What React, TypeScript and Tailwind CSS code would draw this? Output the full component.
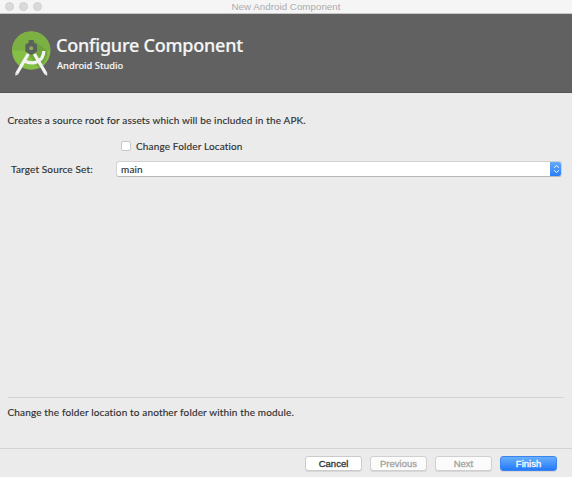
import React from "react";

function Logo() {
  return (
    <svg width="40" height="46" viewBox="0 0 40 46" className="block shrink-0">
      <circle cx="20.2" cy="19.6" r="19.2" fill="#85bf45" />
      <path d="M1 19.6a19.2 19.2 0 0 1 38.4 0Z" fill="#7cb043" />
      <path d="M23 9.5L36.5 20A19.2 19.2 0 0 1 28 36.4L18 25Z" fill="#5f9339" opacity=".5" />
      <path d="M17.2 23L5.8 42.5M23.4 23L34.8 42.5" stroke="#f3f3f3" strokeWidth="3.3" fill="none" />
      <path d="M4.4 41.7l2.8 1.6-2.8 1.5ZM36.2 41.7l-2.8 1.6 2.8 1.5Z" fill="#f3f3f3" />
      <path d="M13 29.8C22 34.3 32.4 31 32.8 20" stroke="#f3f3f3" strokeWidth="3.2" fill="none" />
      <path d="M17.7 9h5v2.7l3.3 1.9v7l-5.8 3.4-5.8-3.4v-7l3.3-1.9Z" fill="#5b605c" />
      <circle cx="20.2" cy="17.3" r="2" fill="#86ae5a" />
    </svg>
  );
}

function DialogButton({ label, tone }: { label: string; tone: "normal" | "disabled" | "primary" }) {
  const styles = {
    normal: "border-[#cbcbcb] bg-white text-[#303030]",
    disabled: "border-[#d0d0d0] bg-[#fbfbfb] text-[#a2a2a2]",
    primary: "border-[#3b85f2] bg-gradient-to-b from-[#68aefb] to-[#2379fb] text-white",
  };
  return (
    <button
      className={`flex h-[15px] w-[57px] items-center justify-center rounded-[3px] border font-['Liberation_Sans',sans-serif] text-[9.5px] leading-none shadow-[0_1px_0_#d7d7d7] [-webkit-text-stroke:0.3px_currentColor] ${styles[tone]}`}
    >
      {label}
    </button>
  );
}

export default function App() {
  return (
    <div className="flex h-[477px] w-[572px] flex-col overflow-hidden bg-[#ebebeb] font-['Lato',sans-serif] text-[10px] text-[#303030]">
      <div className="grid h-[14px] shrink-0 grid-cols-[1fr_auto_1fr] items-center border-b border-[#c9c9c9] bg-[#f5f5f5]">
        <div className="flex gap-[5px] pb-[1px] pl-[5px]">
          <span className="size-[9px] rounded-full border border-[#d0d0d0] bg-[#dadada]" />
          <span className="size-[9px] rounded-full border border-[#d0d0d0] bg-[#dadada]" />
          <span className="size-[9px] rounded-full border border-[#d0d0d0] bg-[#dadada]" />
        </div>
        <span className="font-['Liberation_Sans',sans-serif] text-[9.8px] leading-[13px] text-[#acacac]">New Android Component</span>
      </div>
      <header className="flex h-[79px] shrink-0 gap-[5px] border-b border-[#555] bg-[#616161] pt-[17px] pl-[11px] font-['Noto_Sans',sans-serif] text-[#f5f5f5]">
        <Logo />
        <div>
          <h1 className="mt-[2px] text-[18px] leading-6 font-medium tracking-[-0.22px] whitespace-nowrap [-webkit-text-stroke:0.2px_currentColor]">Configure Component</h1>
          <p className="mt-[3px] pl-px text-[9.3px] leading-3 font-medium [-webkit-text-stroke:0.15px_currentColor]">Android Studio</p>
        </div>
      </header>
      <main className="flex min-h-0 flex-1 flex-col pt-[20px] leading-[14px] tracking-[0.15px] [-webkit-text-stroke:0.15px_currentColor]">
        <p className="pl-[7.5px]">Creates a source root for assets which will be included in the APK.</p>
        <label className="mt-[12px] flex items-center gap-[5px] pl-[121px]">
          <span className="size-[10px] rounded-[2px] border border-[#c8c8c8] bg-white" />
          Change Folder Location
        </label>
        <div className="mt-[8px] flex h-4 items-center pl-[11px]">
          <span className="w-[105px]">Target Source Set:</span>
          <div className="flex h-4 w-[446px] overflow-hidden rounded-[3px] border border-[#d2d2d2] border-b-[#b8b8b8] bg-white">
            <span className="flex-1 pl-[4px] leading-[15px]">main</span>
            <span className="-my-px -mr-px flex w-3 items-center justify-center bg-gradient-to-b from-[#68aefb] to-[#2379fb]">
              <svg width="7" height="10" viewBox="0 0 7 10" fill="none" stroke="white" strokeWidth="1">
                <path d="M1.2 3.7L3.5 1.5l2.3 2.2M1.2 6.3l2.3 2.2 2.3-2.2" />
              </svg>
            </span>
          </div>
        </div>
        <div className="mt-auto mr-[8px] ml-[8px] h-[51px] border-t border-[#d3d3d3] pt-[7px]">
          <p className="-ml-[0.5px]">Change the folder location to another folder within the module.</p>
        </div>
      </main>
      <footer className="flex h-[29px] shrink-0 justify-end gap-[8px] border-t border-[#d3d3d3] pt-[7px] pr-[15px]">
        <DialogButton label="Cancel" tone="normal" />
        <DialogButton label="Previous" tone="disabled" />
        <DialogButton label="Next" tone="disabled" />
        <DialogButton label="Finish" tone="primary" />
      </footer>
    </div>
  );
}
